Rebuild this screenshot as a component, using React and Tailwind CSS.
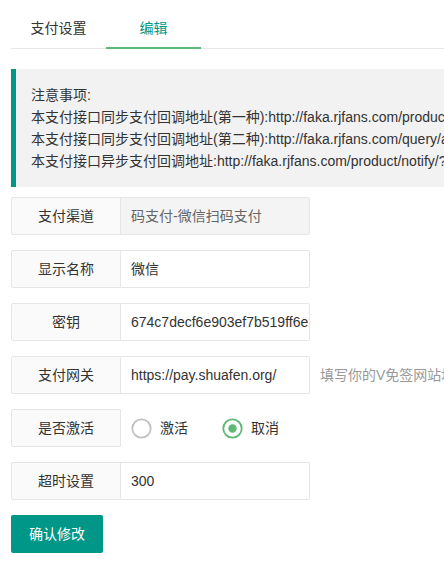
import React from 'react';

const font = { fontFamily: '"Liberation Sans", "Noto Sans CJK SC", sans-serif' };

const Radio = ({ checked, label, className = '' }) => (
  <div className={`flex items-center gap-[8px] ${className}`}>
    <svg width="21" height="21" viewBox="0 0 21 21">
      <circle
        cx="10.5"
        cy="10.5"
        r="9.2"
        fill="none"
        stroke={checked ? '#5FB878' : '#c2c2c2'}
        strokeWidth="1.8"
      />
      {checked && <circle cx="10.5" cy="10.5" r="4.2" fill="#5FB878" />}
    </svg>
    <span className="text-[14px] text-[#333]">{label}</span>
  </div>
);

const Row = ({ label, children, aux }) => (
  <div className="flex items-center mb-[15px]">
    <div className="w-[110px] h-[38px] shrink-0 flex items-center justify-center border border-[#e6e6e6] bg-[#fafafa] rounded-l-[2px] text-[14px] text-[#333]">
      {label}
    </div>
    {children}
    {aux && <div className="ml-[10px] text-[14px] text-[#999] whitespace-nowrap">{aux}</div>}
  </div>
);

const Field = ({ value, disabled }) => (
  <div
    className={`w-[190px] h-[38px] shrink-0 -ml-px flex items-center pl-[10px] border border-[#e6e6e6] rounded-r-[2px] overflow-hidden whitespace-nowrap text-[14px] ${
      disabled ? 'bg-[#f4f4f4] text-[#666]' : 'bg-white text-[#333]'
    }`}
  >
    {value}
  </div>
);

export default function App() {
  return (
    <div className="w-full overflow-hidden bg-white" style={font}>
      <div className="pl-[11px] pt-[8px] pb-[30px]">
        {/* Tabs */}
        <div className="flex h-[41px] border-b border-[#e6e6e6]">
          <div className="w-[95px] h-[40px] leading-[40px] text-center text-[14px] text-[#333]">支付设置</div>
          <div className="relative w-[95px] h-[40px] leading-[40px] text-center text-[14px] text-[#009688]">
            编辑
            <div className="absolute left-0 right-0 bottom-[-1px] h-[2px] bg-[#5FB878]" />
          </div>
        </div>

        {/* Notice */}
        <div className="mt-[20px] mb-[10px] border-l-[5px] border-[#009688] bg-[#f2f2f2] py-[15px] pl-[15px] leading-[22px] text-[14px] text-[#333] whitespace-nowrap">
          <div>注意事项:</div>
          <div>本支付接口同步支付回调地址(第一种):http://faka.rjfans.com/product/return/?paymethod=codepay</div>
          <div>本支付接口同步支付回调地址(第二种):http://faka.rjfans.com/query/auto/?paymethod=codepay</div>
          <div>本支付接口异步支付回调地址:http://faka.rjfans.com/product/notify/?paymethod=codepay</div>
        </div>

        {/* Form */}
        <Row label="支付渠道">
          <Field value="码支付-微信扫码支付" disabled />
        </Row>
        <Row label="显示名称">
          <Field value="微信" />
        </Row>
        <Row label="密钥">
          <Field value="674c7decf6e903ef7b519ff6e2a91c7d" />
        </Row>
        <Row label="支付网关" aux="填写你的V免签网站地址">
          <Field value="https://pay.shuafen.org/" />
        </Row>
        <Row label="是否激活">
          <div className="flex items-center">
            <Radio label="激活" className="ml-[10px]" />
            <Radio label="取消" checked className="ml-[34px]" />
          </div>
        </Row>
        <Row label="超时设置">
          <Field value="300" />
        </Row>

        <button className="w-[92px] h-[38px] bg-[#009688] text-white text-[14px] rounded-[2px]">确认修改</button>
      </div>
    </div>
  );
}
